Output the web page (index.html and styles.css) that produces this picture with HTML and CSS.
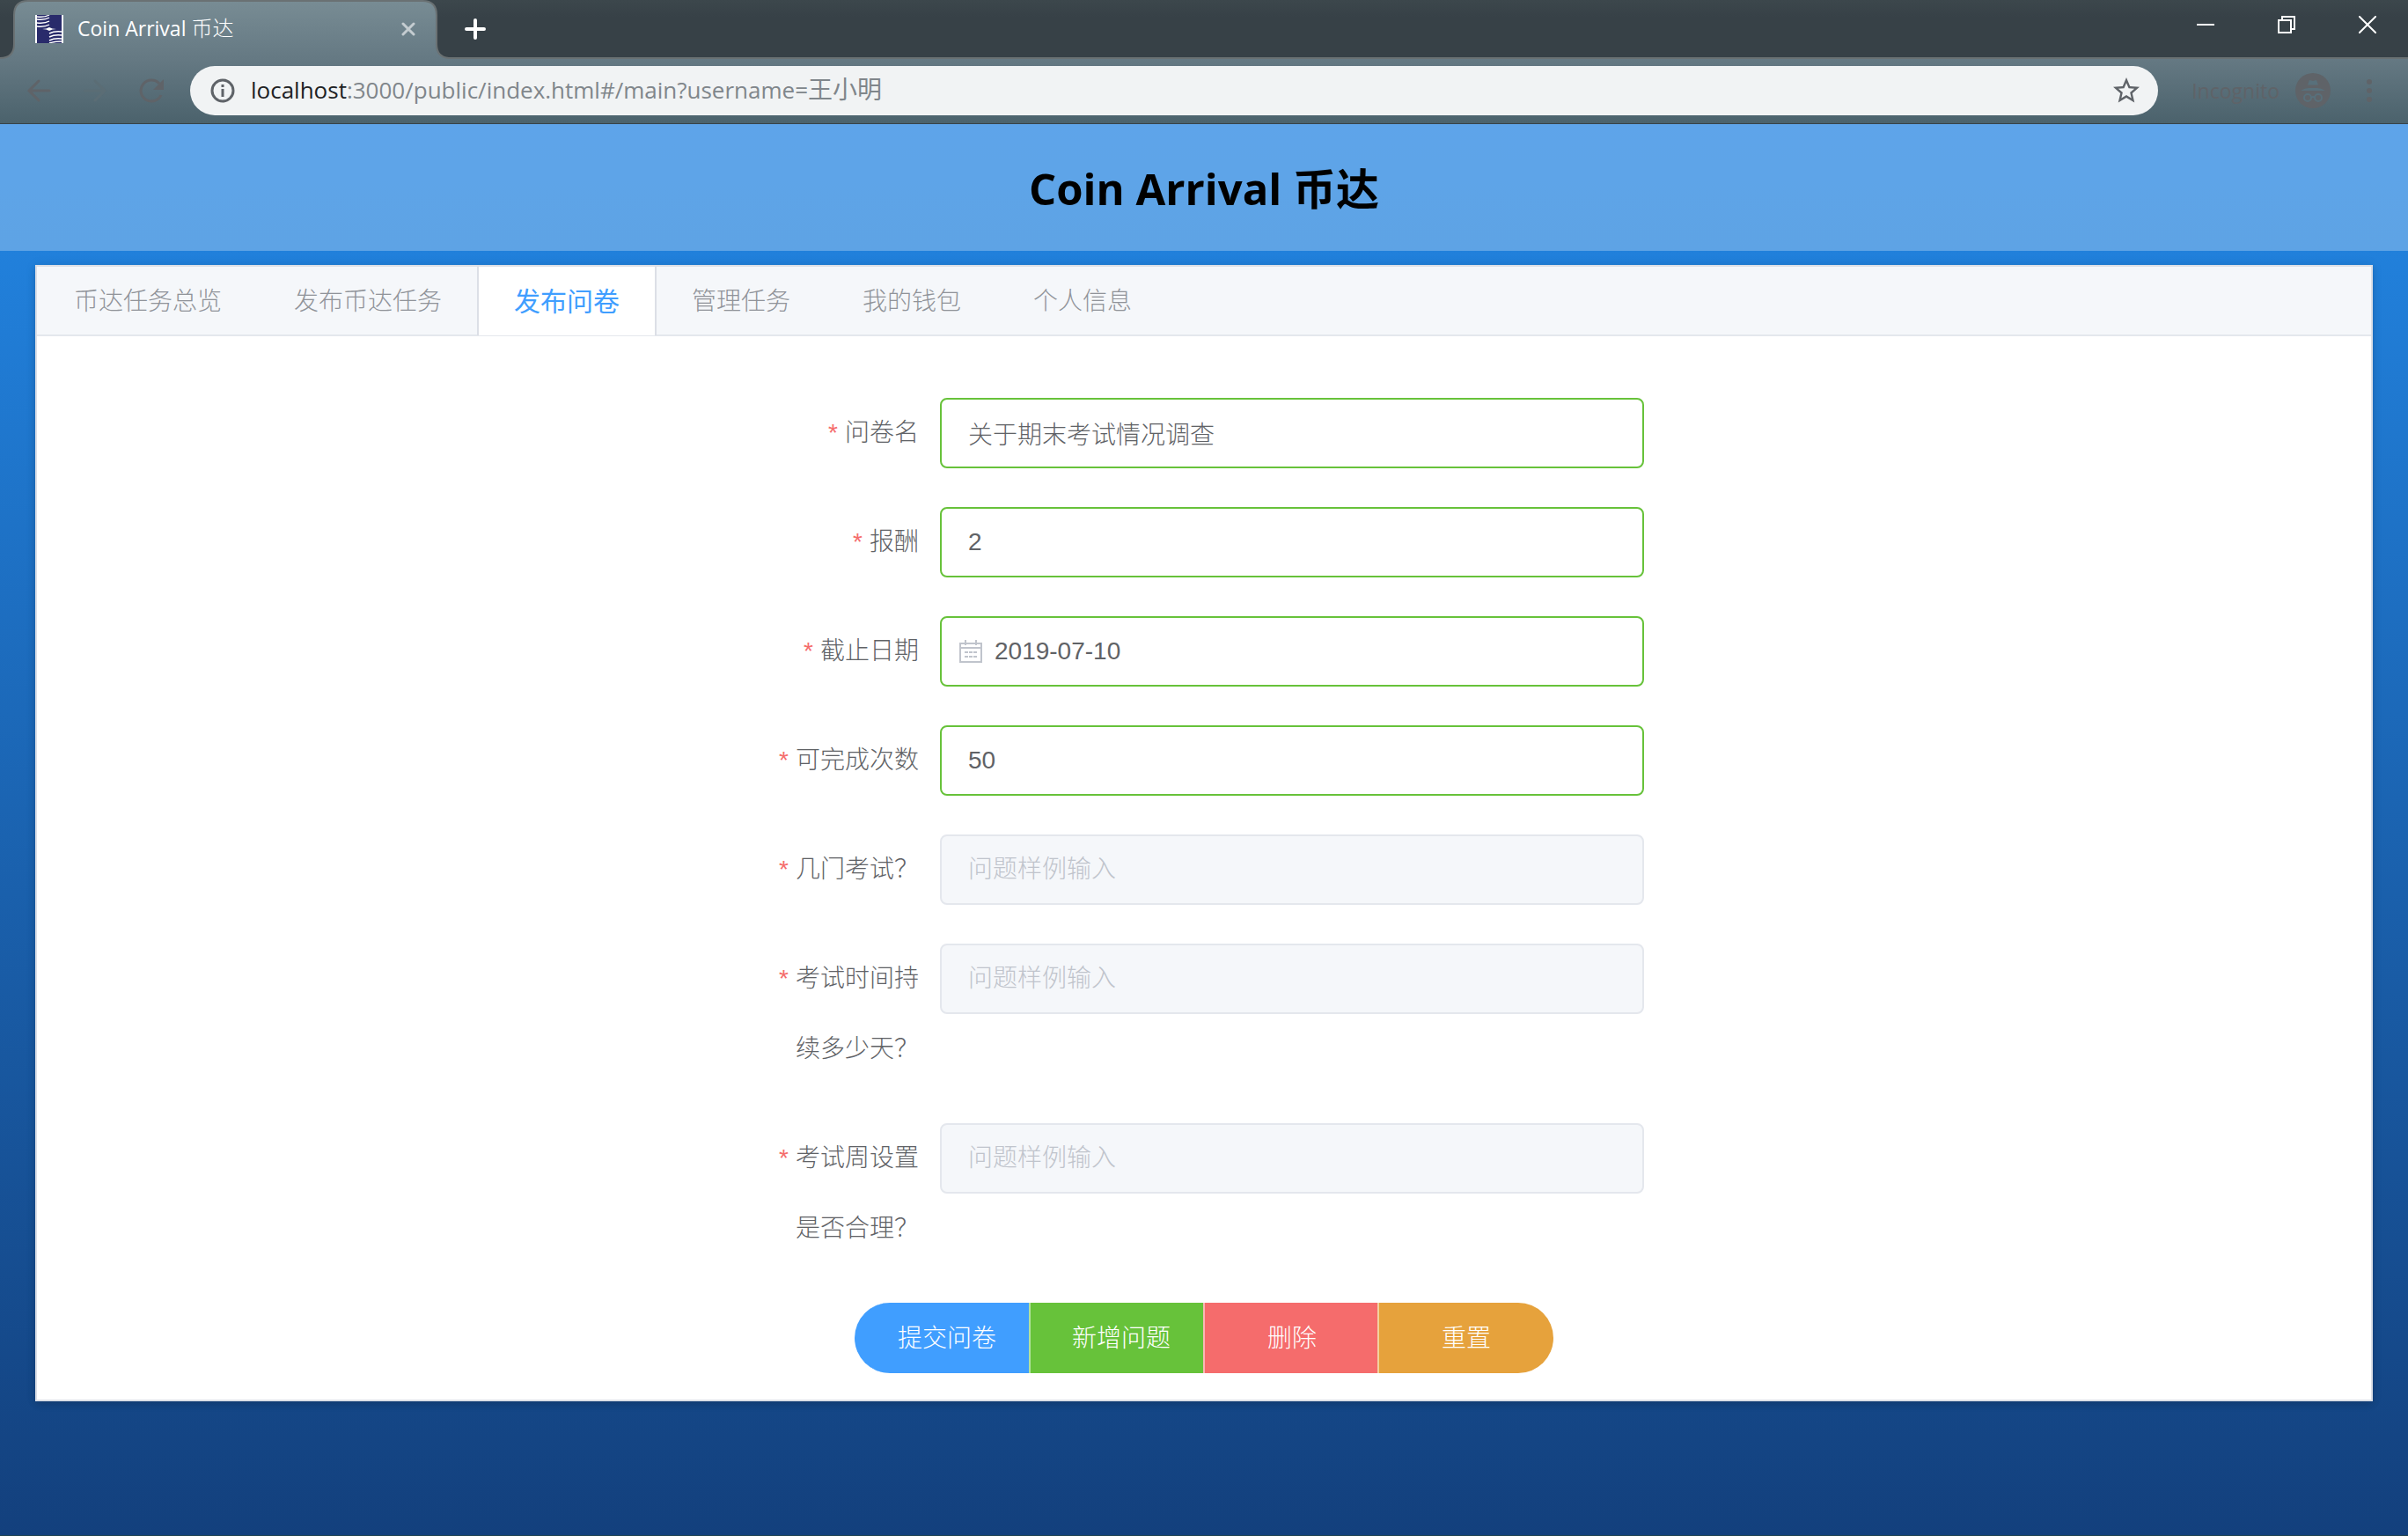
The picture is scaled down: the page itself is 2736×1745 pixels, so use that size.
FILE: index.html
```html
<!DOCTYPE html>
<html lang="zh-CN">
<head>
<meta charset="utf-8">
<title>Coin Arrival 币达</title>
<link rel="stylesheet" href="styles.css">
</head>
<body>
<div class="browser">
  <div class="strip">
    <div class="tab">
      <svg class="tab-shape" width="512" height="67" viewBox="0 0 512 67" aria-hidden="true">
        <defs><linearGradient id="g" x1="0" y1="0" x2="0" y2="1"><stop offset="0" stop-color="#788c94"/><stop offset="1" stop-color="#657983"/></linearGradient></defs>
        <path d="M0 67V66Q16 66 16 50V17Q16 1 32 1H480Q496 1 496 17V50Q496 66 512 66V67Z" fill="url(#g)"/>
        <path d="M0 66Q16 66 16 50V17Q16 1 32 1H480Q496 1 496 17V50Q496 66 512 66" fill="none" stroke="#6a7173" stroke-width="2"/>
      </svg>
      <svg class="favicon" width="32" height="32" viewBox="0 0 32 32" aria-hidden="true">
        <path fill="#fff" d="M0 0h32v32H0z"/><path fill="#292b6b" d="M2 0h28v32H2z"/>
        <path d="M2 2q9 1 14-2M2 5q9 1 14-2M2 9q9 1 14-2M2 13q9 1 14-2M16 21q6-3 14-2M16 25q6-3 14-2M16 29q6-3 14-2M16 32q6-2 14-2" fill="none" stroke="#fff" stroke-width="1.4"/>
        <path d="M8 16q5 0 8-2 3 2 8 2-5 0-8 2-3-2-8-2z" fill="#fff"/>
      </svg>
      <span class="tab-title">Coin Arrival <span class="cjk">币达</span></span>
      <button class="icon-btn" aria-label="关闭标签页"><svg width="16" height="16" viewBox="0 0 16 16"><path d="M2 2l12 12M14 2L2 14" stroke="#c4ccd0" stroke-width="3" stroke-linecap="round"/></svg></button>
    </div>
    <button class="icon-btn" aria-label="新标签页"><svg width="24" height="24" viewBox="0 0 24 24"><path d="M12 2v20M2 12h20" stroke="#fff" stroke-width="4" stroke-linecap="round"/></svg></button>
    <div class="window-controls">
      <button class="icon-btn" aria-label="最小化"><svg width="20" height="20" viewBox="0 0 20 20"><path d="M0 10h20" stroke="#fff" stroke-width="2"/></svg></button>
      <button class="icon-btn" aria-label="还原"><svg width="20" height="20" viewBox="0 0 20 20"><path d="M1 5h14v14H1zM5 5V1h14v14h-4" fill="none" stroke="#fff" stroke-width="2"/></svg></button>
      <button class="icon-btn" aria-label="关闭"><svg width="20" height="20" viewBox="0 0 20 20"><path d="M0 0l20 20M20 0L0 20" stroke="#fff" stroke-width="2"/></svg></button>
    </div>
  </div>
  <div class="toolbar">
    <div class="nav">
      <button class="icon-btn" aria-label="后退"><svg width="28" height="28" viewBox="0 0 28 28"><path d="M26 14H3M14 3L3 14l11 11" fill="none" stroke="#5f6368" stroke-width="3" stroke-linecap="round"/></svg></button>
      <button class="icon-btn" aria-label="前进"><svg width="28" height="28" viewBox="0 0 28 28"><path d="M2 14h23M14 3l11 11-11 11" fill="none" stroke="#5b6d75" stroke-width="3" stroke-linecap="round"/></svg></button>
      <button class="icon-btn" aria-label="重新加载"><svg width="28" height="28" viewBox="0 0 28 28"><path d="M23 6A12 12 0 1 0 25 19" fill="none" stroke="#5f6368" stroke-width="3"/><path d="M28 1v12H16z" fill="#5f6368"/></svg></button>
    </div>
    <div class="omnibox">
      <svg width="28" height="28" viewBox="0 0 28 28" aria-hidden="true"><circle cx="14" cy="14" r="12" fill="none" stroke="#5f6368" stroke-width="3"/><path d="M14 12v9M14 7v3" stroke="#5f6368" stroke-width="3"/></svg>
      <span class="url"><b class="host">localhost</b>:3000/public/index.html#/main?username=<span class="cjk">王小明</span></span>
      <button class="icon-btn" aria-label="收藏"><svg width="30" height="30" viewBox="0 0 24 24"><path fill="#5f6368" d="M22 9.24l-7.19-.62L12 2 9.19 8.63 2 9.24l5.46 4.73L5.82 21 12 17.27 18.18 21l-1.63-7.03L22 9.24zM12 15.4l-3.76 2.27 1-4.28-3.32-2.88 4.38-.38L12 6.1l1.71 4.04 4.38.38-3.32 2.88 1 4.28L12 15.4z" transform="translate(-2.4 -2.4) scale(1.2)"/></svg></button>
    </div>
    <span class="incognito">Incognito</span>
    <svg width="40" height="40" viewBox="0 0 40 40" aria-hidden="true">
      <circle cx="20" cy="20" r="20" fill="#5f6368"/>
      <path d="M14 13.500l2-5.500 4 1 4-1 2 5.500zM6 20q5-3 9-3h10q4 0 9 3z" fill="#58707b"/>
      <g fill="none" stroke="#58707b" stroke-width="2"><circle cx="14" cy="28" r="4"/><circle cx="26" cy="28" r="4"/><path d="M18 28q2-2 4 0"/></g>
    </svg>
    <button class="icon-btn menu" aria-label="菜单"><svg width="6" height="28" viewBox="0 0 6 28" fill="#5f6368"><circle cx="3" cy="4" r="3"/><circle cx="3" cy="14" r="3"/><circle cx="3" cy="24" r="3"/></svg></button>
  </div>
</div>

<div class="page">
  <header class="site-header"><h1>Coin Arrival 币达</h1></header>
  <main class="card">
    <nav class="tabs">
      <a class="tabs-item" href="#overview">币达任务总览</a>
      <a class="tabs-item" href="#task">发布币达任务</a>
      <a class="tabs-item active" href="#survey" aria-current="page">发布问卷</a>
      <a class="tabs-item" href="#manage">管理任务</a>
      <a class="tabs-item" href="#wallet">我的钱包</a>
      <a class="tabs-item" href="#profile">个人信息</a>
    </nav>
    <form class="form">
      <div class="row"><label for="name">问卷名</label><input class="field ok" id="name" type="text" value="关于期末考试情况调查"></div>
      <div class="row"><label for="reward">报酬</label><input class="field ok" id="reward" type="text" value="2"></div>
      <div class="row"><label for="deadline">截止日期</label>
        <div class="date">
          <input class="field ok" id="deadline" type="text" value="2019-07-10">
          <svg class="date-icon" width="26" height="26" viewBox="0 0 26 26" aria-hidden="true"><path d="M1 4h24v21H1zM1 9h24M7 0v6M19 0v6M6 14h4M11 14h4M16 14h4M6 19h4M11 19h4M16 19h4" fill="none" stroke="#c0c4cc" stroke-width="2"/></svg>
        </div>
      </div>
      <div class="row"><label for="times">可完成次数</label><input class="field ok" id="times" type="text" value="50"></div>
      <div class="row"><label for="q1">几门考试？</label><input class="field" id="q1" type="text" placeholder="问题样例输入" disabled></div>
      <div class="row"><label for="q2">考试时间持续多少天？</label><input class="field" id="q2" type="text" placeholder="问题样例输入" disabled></div>
      <div class="row"><label for="q3">考试周设置是否合理？</label><input class="field" id="q3" type="text" placeholder="问题样例输入" disabled></div>
      <div class="buttons">
        <button type="button" class="btn primary long">提交问卷</button>
        <button type="button" class="btn success long">新增问题</button>
        <button type="button" class="btn danger">删除</button>
        <button type="button" class="btn warning">重置</button>
      </div>
    </form>
  </main>
</div>
</body>
</html>
```
FILE: styles.css
```css
* { box-sizing: border-box; }

body {
  margin: 0;
  min-height: 100vh;
  display: flex;
  flex-direction: column;
  font-family: "Liberation Sans", "Noto Sans CJK SC", sans-serif;
  font-size: 28px;
  color: #606266;
}

button { font: inherit; border: 0; padding: 0; margin: 0; cursor: pointer; }
.icon-btn { display: flex; background: none; }

/* Browser frame */
.browser {
  font-family: "Open Sans", "Noto Sans CJK SC", sans-serif;
  border-bottom: 1px solid #374349;
}

.strip {
  display: flex;
  align-items: center;
  height: 67px;
  background: linear-gradient(#3c474c, #374147 30%);
  border-bottom: 2px solid #6a7173;
}

.tab {
  position: relative;
  display: flex;
  align-items: center;
  width: 512px;
  height: 65px;
  margin-right: 16px;
  padding: 0 40px;
}

.tab-shape { position: absolute; left: 0; top: 0; }
.favicon { position: relative; }

.tab-title {
  position: relative;
  flex: 1;
  margin-left: 16px;
  padding-bottom: 2px;
  font-size: 23px;
  line-height: 32px;
  color: #fff;
}

.tab-title .cjk { font-size: 24px; font-weight: 300; }
.tab .icon-btn { position: relative; }

.window-controls {
  display: flex;
  gap: 72px;
  align-self: flex-start;
  margin-left: auto;
  padding: 18px 36px 0 0;
}

.toolbar {
  display: flex;
  align-items: center;
  height: 73px;
  padding: 0 41px 2px 30px;
  background: linear-gradient(#657983, #4b626c);
}

.nav { display: flex; gap: 36px; margin-right: 30px; }

.omnibox {
  flex: 1;
  display: flex;
  align-items: center;
  height: 56px;
  margin-right: 38px;
  padding: 0 21px 0 23px;
  border-radius: 28px;
  background: #f1f3f4;
}

.url {
  flex: 1;
  margin-left: 18px;
  padding-bottom: 2px;
  font-size: 26px;
  line-height: 40px;
  color: #80868b;
}

.url .cjk { font-size: 28px; }
.host { font-weight: 400; color: #202124; }
.incognito { margin-right: 18px; font-size: 23px; color: #5f6368; }
.menu { margin-left: 41px; }

/* Page */
.page {
  flex: 1;
  background: linear-gradient(#2082e2, #2180db 9%, #13407d);
  border-bottom: 1px solid #1f4350;
}

.site-header {
  display: flex;
  align-items: center;
  justify-content: center;
  height: 144px;
  padding-top: 2px;
  background: rgba(255, 255, 255, .28);
}

h1 {
  margin: 0;
  font: 700 49px/64px "Open Sans", "Noto Sans CJK SC", sans-serif;
  color: #000;
}

.card {
  margin: 16px 40px;
  border: 2px solid #dcdfe6;
  background: #fff;
  box-shadow: 0 4px 8px rgba(0, 0, 0, .12), 0 0 12px rgba(0, 0, 0, .08);
}

.tabs {
  display: flex;
  height: 79px;
  background: #f5f7fa;
  border-bottom: 2px solid #e4e7ed;
}

.tabs-item {
  height: 78px;
  margin-right: -2px;
  padding: 0 40px;
  border: solid transparent;
  border-width: 0 2px;
  font-weight: 300;
  line-height: 80px;
  color: #909399;
  text-decoration: none;
}

.tabs-item.active {
  font-size: 30px;
  font-weight: 400;
  color: #409eff;
  background: #fff;
  border-color: #dcdfe6;
}

/* Form */
.form {
  width: 100%;
  max-width: 1000px;
  margin: 0 auto;
  padding: 70px 0 30px;
}

.row { display: flex; align-items: flex-start; margin-bottom: 44px; }

label {
  width: 200px;
  padding-right: 24px;
  font-weight: 300;
  line-height: 80px;
  text-align: right;
}

label::before { content: "*"; margin-right: 8px; color: #f56c6c; font-weight: 400; }

.field {
  flex: 1;
  width: 100%;
  height: 80px;
  padding: 0 30px;
  border: 2px solid #e4e7ed;
  border-radius: 8px;
  background: #fff;
  font: inherit;
  font-weight: 300;
  color: #606266;
}

.field.ok { border-color: #67c23a; }
.field:disabled { background: #f5f7fa; }
.field::placeholder { color: #c0c4cc; opacity: 1; }

.date { position: relative; display: flex; flex: 1; }
.date .field { padding-left: 60px; }
.date-icon { position: absolute; left: 22px; top: 27px; }

.buttons { display: flex; justify-content: center; }

.btn {
  width: 200px;
  height: 80px;
  padding-bottom: 4px;
  border-left: 2px solid rgba(255, 255, 255, .5);
  font-weight: 300;
  color: #fff;
}

.btn + .btn { margin-left: -2px; }
.long { padding-left: 8px; }
.primary { background: #409eff; border-left-color: #409eff; border-radius: 40px 0 0 40px; }
.success { background: #67c23a; }
.danger { background: #f56c6c; }
.warning { background: #e6a23c; border-radius: 0 40px 40px 0; }
```
